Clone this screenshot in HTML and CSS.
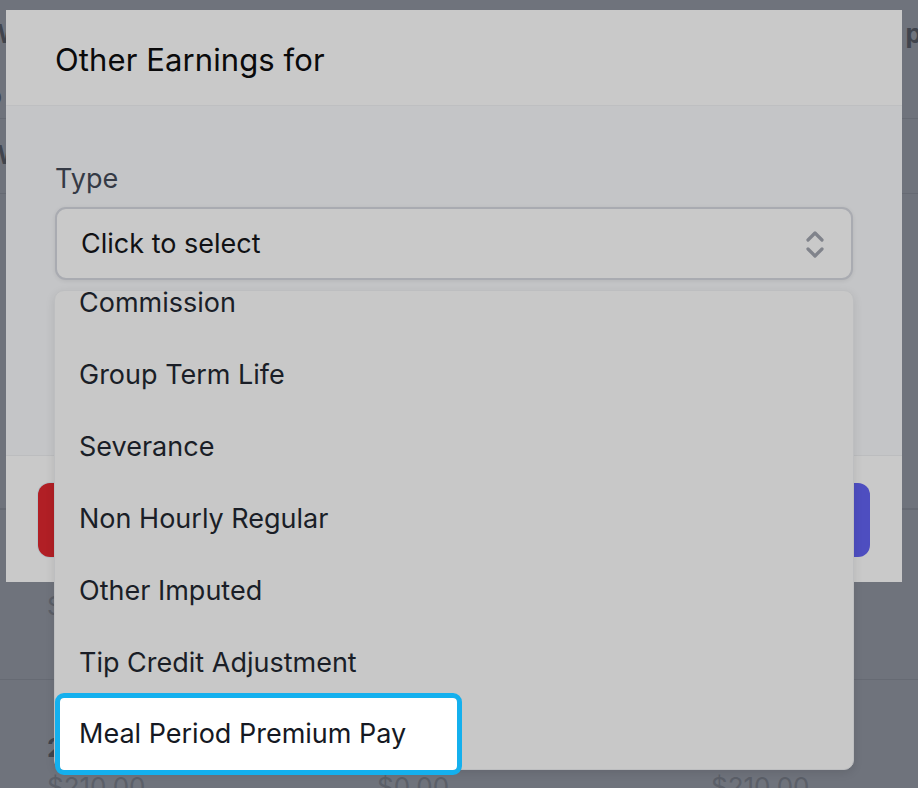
FILE: index.html
```html
<!DOCTYPE html>
<html>
<head>
<meta charset="utf-8">
<link rel="stylesheet" href="styles.css">
</head>
<body>
<div class="page">
  <div class="bg-row row-a">
    <div class="bg-line"><span class="bg-strong cut">W</span><span class="bg-strong far">p</span></div>
    <div class="bg-line"><span class="bg-strong cut">o</span></div>
  </div>
  <div class="bg-row row-b"><span class="bg-strong cut">W</span></div>
  <div class="bg-row row-c"></div>
  <div class="bg-row row-d"></div>
  <div class="bg-row row-e"><span class="bg-muted">S</span></div>
  <div class="bg-row row-f">
    <div class="bg-strong">2</div>
    <div class="amounts"><span>$210.00</span><span>$0.00</span><span>$210.00</span></div>
  </div>
</div>

<div class="modal">
  <div class="modal-header">
    <h2 class="modal-title">Other Earnings for</h2>
  </div>
  <div class="modal-body">
    <label class="field-label">Type</label>
    <div class="select-wrap">
      <div class="select">
        <span>Click to select</span>
        <svg class="chev" width="18" height="30" viewBox="0 0 18 30">
          <polyline points="2,11 9,4 16,11" fill="none" stroke="#80838b" stroke-width="3.2" stroke-linecap="round" stroke-linejoin="round"/>
          <polyline points="2,20 9,27 16,20" fill="none" stroke="#80838b" stroke-width="3.2" stroke-linecap="round" stroke-linejoin="round"/>
        </svg>
      </div>
      <div class="dropdown">
        <ul class="options">
          <li class="option">Commission</li>
          <li class="option">Group Term Life</li>
          <li class="option">Severance</li>
          <li class="option">Non Hourly Regular</li>
          <li class="option">Other Imputed</li>
          <li class="option">Tip Credit Adjustment</li>
          <li class="option focused">Meal Period Premium Pay</li>
        </ul>
      </div>
    </div>
  </div>
  <div class="modal-footer">
    <button class="btn btn-danger" aria-label="Delete"></button>
    <button class="btn btn-primary" aria-label="Save"></button>
  </div>
</div>
</body>
</html>
```

FILE: styles.css
```css
html, body {
  margin: 0;
  padding: 0;
}
body {
  width: 918px;
  height: 788px;
  overflow: hidden;
  background: #6f737c;
  font-family: Inter, "Liberation Sans", sans-serif;
  position: relative;
}

/* background page (dimmed) */
.page {
  color: #474b54;
  font-size: 26px;
}
.bg-row {
  box-sizing: border-box;
  border-bottom: 1px solid #666a73;
}
.bg-strong { font-weight: 700; color: #40444d; }
.bg-muted { color: #5a5e67; }
.row-a { height: 119px; padding-top: 18px; }
.row-a .bg-line { height: 62px; display: flex; }
.cut { margin-left: -14px; }
.far { margin-left: auto; margin-right: -4px; }
.row-b { height: 75px; padding-top: 20px; }
.row-c { height: 315px; }
.row-d { height: 0; }
.row-e { height: 170px; padding: 80px 0 0 47px; }
.row-f { padding: 52px 0 0 47px; border-bottom: none; }
.amounts {
  display: grid;
  grid-template-columns: 330px 334px auto;
  color: #5b5f68;
  margin-top: 8px;
}

/* modal */
.modal {
  position: absolute;
  left: 6px;
  top: 10px;
  width: 896px;
  background: #c4c5c7;
}
.modal-header {
  box-sizing: border-box;
  height: 96px;
  background: #c9c9c9;
  border-bottom: 1px solid #bebfc1;
  padding-left: 49px;
  display: flex;
  align-items: center;
}
.modal-title {
  margin: 0;
  font-size: 31px;
  font-weight: 400;
  color: #0a0a0b;
  padding-top: 4px;
  letter-spacing: 0.1px;
}
.modal-body {
  box-sizing: border-box;
  height: 350px;
  padding: 55px 49px 0 49px;
  border-bottom: 1px solid #bcbdbf;
}
.field-label {
  display: block;
  font-size: 27px;
  line-height: 36px;
  color: #353a45;
  font-weight: 400;
}
.select-wrap {
  position: relative;
  margin-top: 10px;
}
.select {
  box-sizing: border-box;
  height: 73px;
  width: 798px;
  border: 2px solid #a9abb1;
  border-radius: 11px;
  background: #c9c9c9;
  box-shadow: 0 1px 4px rgba(0,0,0,0.08);
  display: flex;
  align-items: center;
  justify-content: space-between;
  padding: 0 27px 0 24px;
  font-size: 27px;
  color: #101114;
}
.chev { display: block; }
.dropdown {
  position: absolute;
  left: -1px;
  top: 83px;
  width: 800px;
  height: 480px;
  box-sizing: border-box;
  background: #c8c8c8;
  border: 1px solid #bdbec0;
  border-radius: 10px;
  box-shadow: 0 3px 10px rgba(0,0,0,0.10);
}
.options {
  list-style: none;
  margin: -24px 0 0 0;
  padding: 0;
}
.option {
  height: 72px;
  line-height: 72px;
  padding-left: 24px;
  font-size: 27px;
  color: #1a1e27;
}
.option.focused {
  box-sizing: border-box;
  width: 397px;
  margin-left: 5px;
  margin-top: -1px;
  padding-left: 19px;
  background: #ffffff;
  border-radius: 4px;
  outline: 5px solid #14b0ee;
  outline-offset: 0;
  color: #151923;
}

.modal-footer {
  box-sizing: border-box;
  height: 126px;
  background: #c9c9c9;
  padding: 27px 32px 0 32px;
  display: flex;
  justify-content: space-between;
  align-items: flex-start;
}
.btn {
  height: 74px;
  width: 200px;
  border: none;
  border-radius: 12px;
}
.btn-danger {
  background: #b11f25;
  box-shadow: 0 0 0 1px #b5c3c7;
}
.btn-primary {
  background: #4e4ec0;
}
```
